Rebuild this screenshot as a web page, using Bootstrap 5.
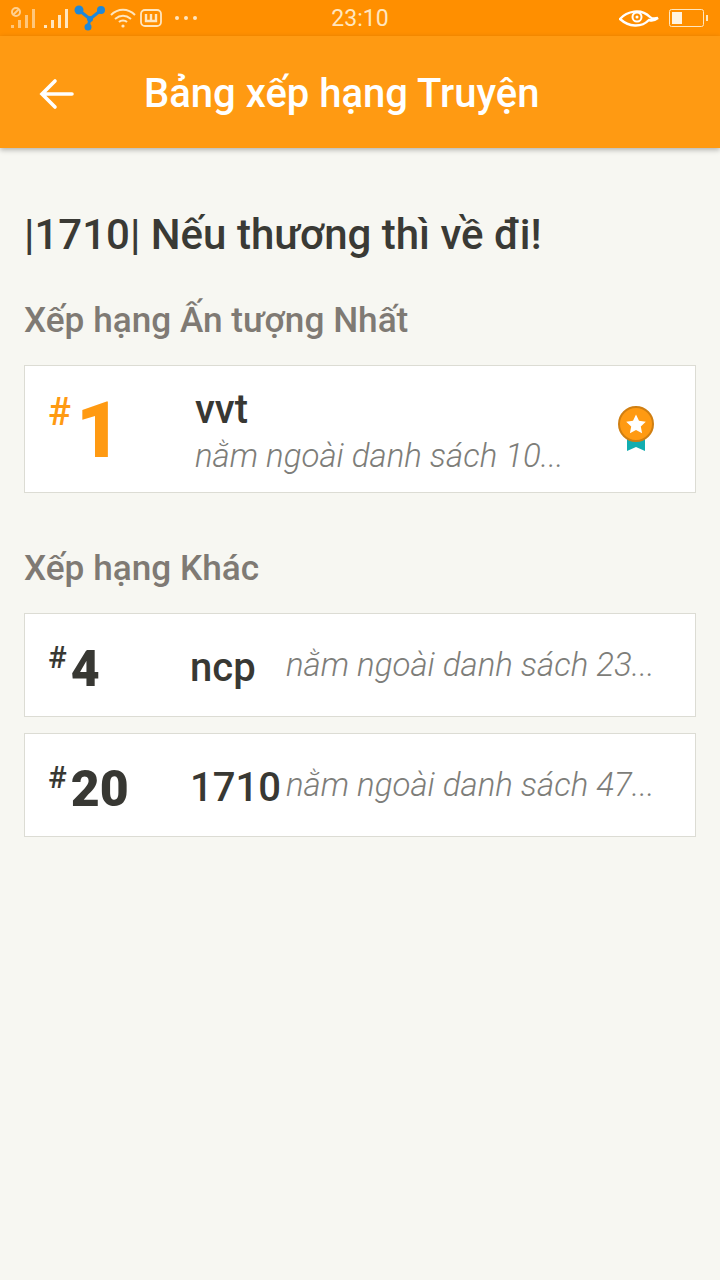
<!DOCTYPE html>
<html lang="vi">
<head>
    <meta charset="UTF-8">
    <meta name="viewport" content="width=device-width, initial-scale=1.0">
    <title>Bảng xếp hạng Truyện</title>
    <link href="https://cdn.jsdelivr.net/npm/bootstrap@5.3.0/dist/css/bootstrap.min.css" rel="stylesheet">
    <style>
        body {
            background: #f7f7f2;
            font-family: Roboto, "Liberation Sans", sans-serif;
            height: 1280px;
            overflow: hidden;
        }
        .status-bar {
            height: 36px;
            background: #ff8f00;
            color: #ffe6bf;
            padding: 0 12px 0 10px;
        }
        .status-left { width: 301px; gap: 4px; }
        .status-time { font-size: 23px; width: 98px; text-align: center; line-height: 36px; padding-top: 2px; }
        .status-right { flex: 1; gap: 10px; }
        .app-bar {
            height: 112px;
            background: #ff9a12;
            box-shadow: 0 2px 5px rgba(0, 0, 0, .28);
            color: #fff;
            padding: 3px 0 0 39px;
        }
        .app-title { font-size: 40px; font-weight: 500; margin-left: 70px; line-height: 1; }
        .page-body { padding: 63px 24px 0; }
        .story-title { font-size: 42px; font-weight: 500; color: #3a3a35; line-height: 48px; margin: 0 0 41px; }
        .section-title { font-size: 35.2px; font-weight: 500; color: #7f7a74; line-height: 40px; margin: 0 0 25px; }
        .rank-box {
            background: #fff;
            border: 1px solid #dcdcd4;
            border-radius: 0;
            padding-left: 23px;
            color: #383833;
        }
        .rank-top { height: 128px; margin-bottom: 55px; }
        .rank-row { height: 104px; margin-bottom: 16px; }
        .hash { font-size: 31px; font-weight: 500; line-height: 1; }
        .rank-top .hash { color: #ff9a12; font-size: 38px; margin-top: -35px; }
        .rank-row .hash { margin-top: -15px; }
        .rank-num { font-weight: 900; line-height: 1; }
        .rank-top .rank-num { color: #ff9a12; font-size: 78px; margin: 4px 0 0 5px; }
        .rank-row .rank-num { font-size: 50px; margin: 7px 0 0 4px; }
        .rank-cell { flex: 0 0 147px; }
        .rank-row .rank-cell { flex-basis: 142px; }
        .reader { font-size: 40px; font-weight: 500; line-height: 1; }
        .rank-top .reader { line-height: 46px; }
        .rank-top .reader-wrap { padding-top: 8px; }
        .rank-row .reader { width: 96px; flex: none; padding-top: 6px; }
        .note { font-size: 33px; font-style: italic; font-weight: 300; color: #7d7d79; white-space: nowrap; line-height: 46px; }
        .medal { margin: 0 41px 0 auto; }
    </style>
</head>
<body>
    <div class="status-bar d-flex align-items-center">
        <div class="status-left d-flex align-items-center">
            <svg width="26" height="22" viewBox="0 0 26 22" fill="#ffd9a3" opacity=".75">
                <circle cx="6" cy="5" r="4" fill="none" stroke="#ffe6bf" stroke-width="2"/>
                <path d="M3 8l6-6" stroke="#ffe6bf" stroke-width="2"/>
                <rect x="1" y="18" width="3" height="3"/><rect x="8" y="13" width="3" height="8"/><rect x="15" y="8" width="3" height="13"/><rect x="22" y="2" width="3" height="19"/>
            </svg>
            <svg width="26" height="22" viewBox="0 0 26 22" fill="#ffe6bf" class="ms-1">
                <rect x="0" y="18" width="3" height="3"/><rect x="7" y="13" width="3" height="8"/><rect x="14" y="8" width="3" height="13"/><rect x="21" y="2" width="3" height="19"/>
            </svg>
            <svg width="32" height="26" viewBox="0 0 32 26" fill="#1e88d8">
                <path d="M6 6l10 8 10-8M16 14l-2 8" fill="none" stroke="#1e88d8" stroke-width="3"/>
                <circle cx="5" cy="5" r="4.500"/><circle cx="27" cy="5" r="4"/><circle cx="16" cy="14" r="3"/><circle cx="14" cy="22" r="3.500"/>
            </svg>
            <svg width="26" height="22" viewBox="0 0 26 22" fill="none" stroke="#ffe6bf" stroke-width="2">
                <path d="M1 8c7-7 17-7 24 0M5 12c5-4 11-4 16 0M9 15c2-2 6-2 8 0"/>
                <circle cx="13" cy="19" r="1.600" fill="#ffe6bf" stroke="none"/>
            </svg>
            <svg width="22" height="18" viewBox="0 0 22 18" fill="none" stroke="#ffe6bf">
                <rect x="1" y="1" width="20" height="16" rx="4" stroke-width="1.800"/>
                <path d="M6 5v7h10V5M11 5v7" stroke-width="2.400"/>
            </svg>
            <svg width="24" height="6" viewBox="0 0 24 6" fill="#ffe6bf" class="ms-2">
                <circle cx="3" cy="3" r="2"/><circle cx="12" cy="3" r="2"/><circle cx="21" cy="3" r="2"/>
            </svg>
        </div>
        <div class="status-time">23:10</div>
        <div class="status-right d-flex align-items-center justify-content-end">
            <svg width="40" height="20" viewBox="0 0 40 20" fill="none" stroke="#fff">
                <path d="M1 11C8 3 22 0 31 9c2 2 4 2 8 1-4 3-6 3-9 2-8 8-20 7-29-1z" stroke-width="2.400"/>
                <circle cx="18" cy="9" r="4.500" stroke-width="2"/>
                <circle cx="18" cy="9" r="1.500" fill="#fff" stroke="none"/>
            </svg>
            <svg width="39" height="18" viewBox="0 0 39 18">
                <rect x=".5" y=".5" width="34" height="17" rx="2" fill="none" stroke="#ffe6bf"/>
                <rect x="3" y="3" width="10" height="12" fill="#fff3e0"/>
                <rect x="37" y="6" width="2" height="6" fill="#ffe6bf"/>
            </svg>
        </div>
    </div>

    <div class="app-bar d-flex align-items-center">
        <svg width="35" height="32" viewBox="0 0 35 32" fill="none" stroke="#fff" stroke-width="3.600" stroke-linecap="round">
            <path d="M33 16H4M16 3L3 16l13 13"/>
        </svg>
        <div class="app-title">Bảng xếp hạng Truyện</div>
    </div>

    <div class="page-body">
        <h1 class="story-title">|1710| Nếu thương thì về đi!</h1>

        <h2 class="section-title">Xếp hạng Ấn tượng Nhất</h2>
        <div class="rank-box rank-top d-flex align-items-center">
            <div class="rank-cell d-flex align-items-center">
                <span class="hash">#</span><span class="rank-num">1</span>
            </div>
            <div class="reader-wrap">
                <div class="reader">vvt</div>
                <div class="note">nằm ngoài danh sách 10...</div>
            </div>
            <svg class="medal" width="36" height="46" viewBox="0 0 36 46">
                <path d="M9 28h18v17l-9-4-9 4z" fill="#12adb0"/>
                <circle cx="18" cy="18" r="17" fill="#ff9a12" stroke="#d07f12" stroke-width="2"/>
                <path d="M18 8.500l3 6.300 6.800.9-5 4.700 1.300 6.800-6.100-3.300-6.100 3.300 1.300-6.800-5-4.700 6.800-.9z" fill="#fff"/>
            </svg>
        </div>

        <h2 class="section-title">Xếp hạng Khác</h2>
        <div class="rank-box rank-row d-flex align-items-center">
            <div class="rank-cell d-flex align-items-center">
                <span class="hash">#</span><span class="rank-num">4</span>
            </div>
            <div class="reader">ncp</div>
            <div class="note">nằm ngoài danh sách 23...</div>
        </div>
        <div class="rank-box rank-row d-flex align-items-center">
            <div class="rank-cell d-flex align-items-center">
                <span class="hash">#</span><span class="rank-num">20</span>
            </div>
            <div class="reader">1710</div>
            <div class="note">nằm ngoài danh sách 47...</div>
        </div>
    </div>

    <script src="https://cdn.jsdelivr.net/npm/bootstrap@5.3.0/dist/js/bootstrap.bundle.min.js"></script>
</body>
</html>
